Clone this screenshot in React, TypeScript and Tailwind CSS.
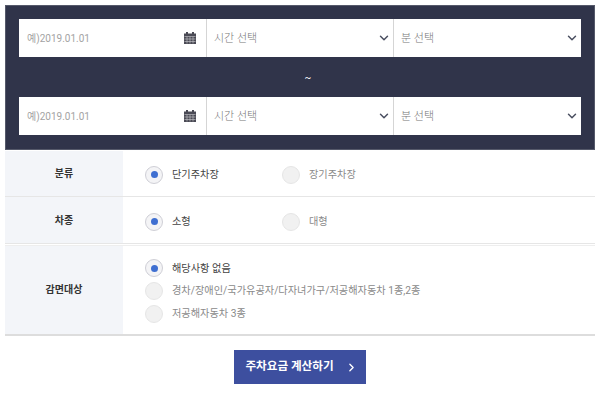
import { ChevronDown, ChevronRight } from 'lucide-react';

const fontStack = "font-['Roboto','Noto_Sans_CJK_KR',sans-serif]";

const CalendarIcon = () => (
  <svg width="12" height="12" viewBox="0 0 12 12" className="shrink-0">
    <rect x="0" y="1.5" width="12" height="10.5" fill="#4a4a55" />
    <rect x="2" y="0" width="2" height="3" fill="#4a4a55" />
    <rect x="8" y="0" width="2" height="3" fill="#4a4a55" />
    <path d="M0.5 4.5H11.5M0.5 7H11.5M0.5 9.5H11.5M3 4.5V11.5M6 4.5V11.5M9 4.5V11.5" stroke="#c9c9cf" strokeWidth="0.6" fill="none" />
  </svg>
);

const DateRow = () => (
  <div className="flex h-[38px] bg-white">
    <div className="flex w-[188px] items-center justify-between border-r border-[#d5d5d5] pl-2 pr-[10px]">
      <span className="pt-[1px] text-[10px] text-[#a3a3a3]">예)2019.01.01</span>
      <CalendarIcon />
    </div>
    <div className="flex w-[187px] items-center justify-between border-r border-[#d5d5d5] pl-[7px] pr-[2px]">
      <span className="pt-[3px] text-[11px] font-light text-[#777777]">시간 선택</span>
      <ChevronDown size={14} strokeWidth={2.5} className="text-[#4a4f60]" />
    </div>
    <div className="flex flex-1 items-center justify-between pl-[7px] pr-[2px]">
      <span className="pt-[3px] text-[11px] font-light text-[#777777]">분 선택</span>
      <ChevronDown size={14} strokeWidth={2.5} className="text-[#4a4f60]" />
    </div>
  </div>
);

const Radio = ({ label, checked, className = '' }: { label: string; checked?: boolean; className?: string }) => (
  <div className={`flex items-center gap-[9px] ${className}`}>
    {checked ? (
      <span className="flex h-[18px] w-[18px] items-center justify-center rounded-full border border-[#cfcfd6] bg-[#f4f4f6]">
        <span className="h-[7px] w-[7px] rounded-full bg-[#3f6fd1]" />
      </span>
    ) : (
      <span className="h-[18px] w-[18px] rounded-full border border-[#e6e6e6] bg-[#f1f1f1]" />
    )}
    <span className={`text-[10.2px] ${checked ? 'text-[#444444]' : 'text-[#8a8a8a]'}`}>{label}</span>
  </div>
);

const Row = ({ title, className, labelClass = '', children }: { title: string; className: string; labelClass?: string; children: React.ReactNode }) => (
  <div className={`flex ${className}`}>
    <div className={`flex w-[118px] shrink-0 items-center justify-center bg-[#f3f5f9] text-[10px] font-bold text-[#333333] ${labelClass}`}>
      {title}
    </div>
    {children}
  </div>
);

export default function App() {
  return (
    <div className={`h-[400px] w-[600px] overflow-hidden bg-white px-[5px] pt-[5px] ${fontStack}`}>
      <div className="h-[145px] w-[590px] border border-[#55596a] bg-[#30344a] px-[13px] pt-[13px]">
        <DateRow />
        <div className="flex h-[40px] items-center justify-center pl-[16px] text-[10px] text-white">~</div>
        <DateRow />
      </div>

      <div className="mt-[1px] w-[590px]">
        <Row title="분류" className="h-[46px] border-b border-[#e6e6e6]">
          <div className="flex items-center pl-[22px] pt-[2px]">
            <Radio label="단기주차장" checked className="w-[137px]" />
            <Radio label="장기주차장" />
          </div>
        </Row>
        <Row title="차종" className="h-[47px] border-b border-[#e6e6e6]">
          <div className="flex items-center pl-[22px] pt-[3px]">
            <Radio label="소형" checked className="w-[137px]" />
            <Radio label="대형" />
          </div>
        </Row>
        <Row title="감면대상" labelClass="pb-[2px]" className="mt-[1px] h-[91px] border-b-2 border-t border-b-[#dddddd] border-t-[#eeeeee]">
          <div className="flex flex-col justify-center gap-[4.7px] pl-[22px] pt-[2px]">
            <Radio label="해당사항 없음" checked />
            <Radio label="경차/장애인/국가유공자/다자녀가구/저공해자동차 1종,2종" />
            <Radio label="저공해자동차 3종" />
          </div>
        </Row>
      </div>

      <div className="mt-[14px] flex justify-center">
        <button className="flex h-[34px] w-[132px] items-center justify-center gap-[11px] bg-[#3d4f9f] pl-[3px] text-[11.6px] font-bold text-white">
          주차요금 계산하기
          <ChevronRight size={13} strokeWidth={2.5} />
        </button>
      </div>
    </div>
  );
}
